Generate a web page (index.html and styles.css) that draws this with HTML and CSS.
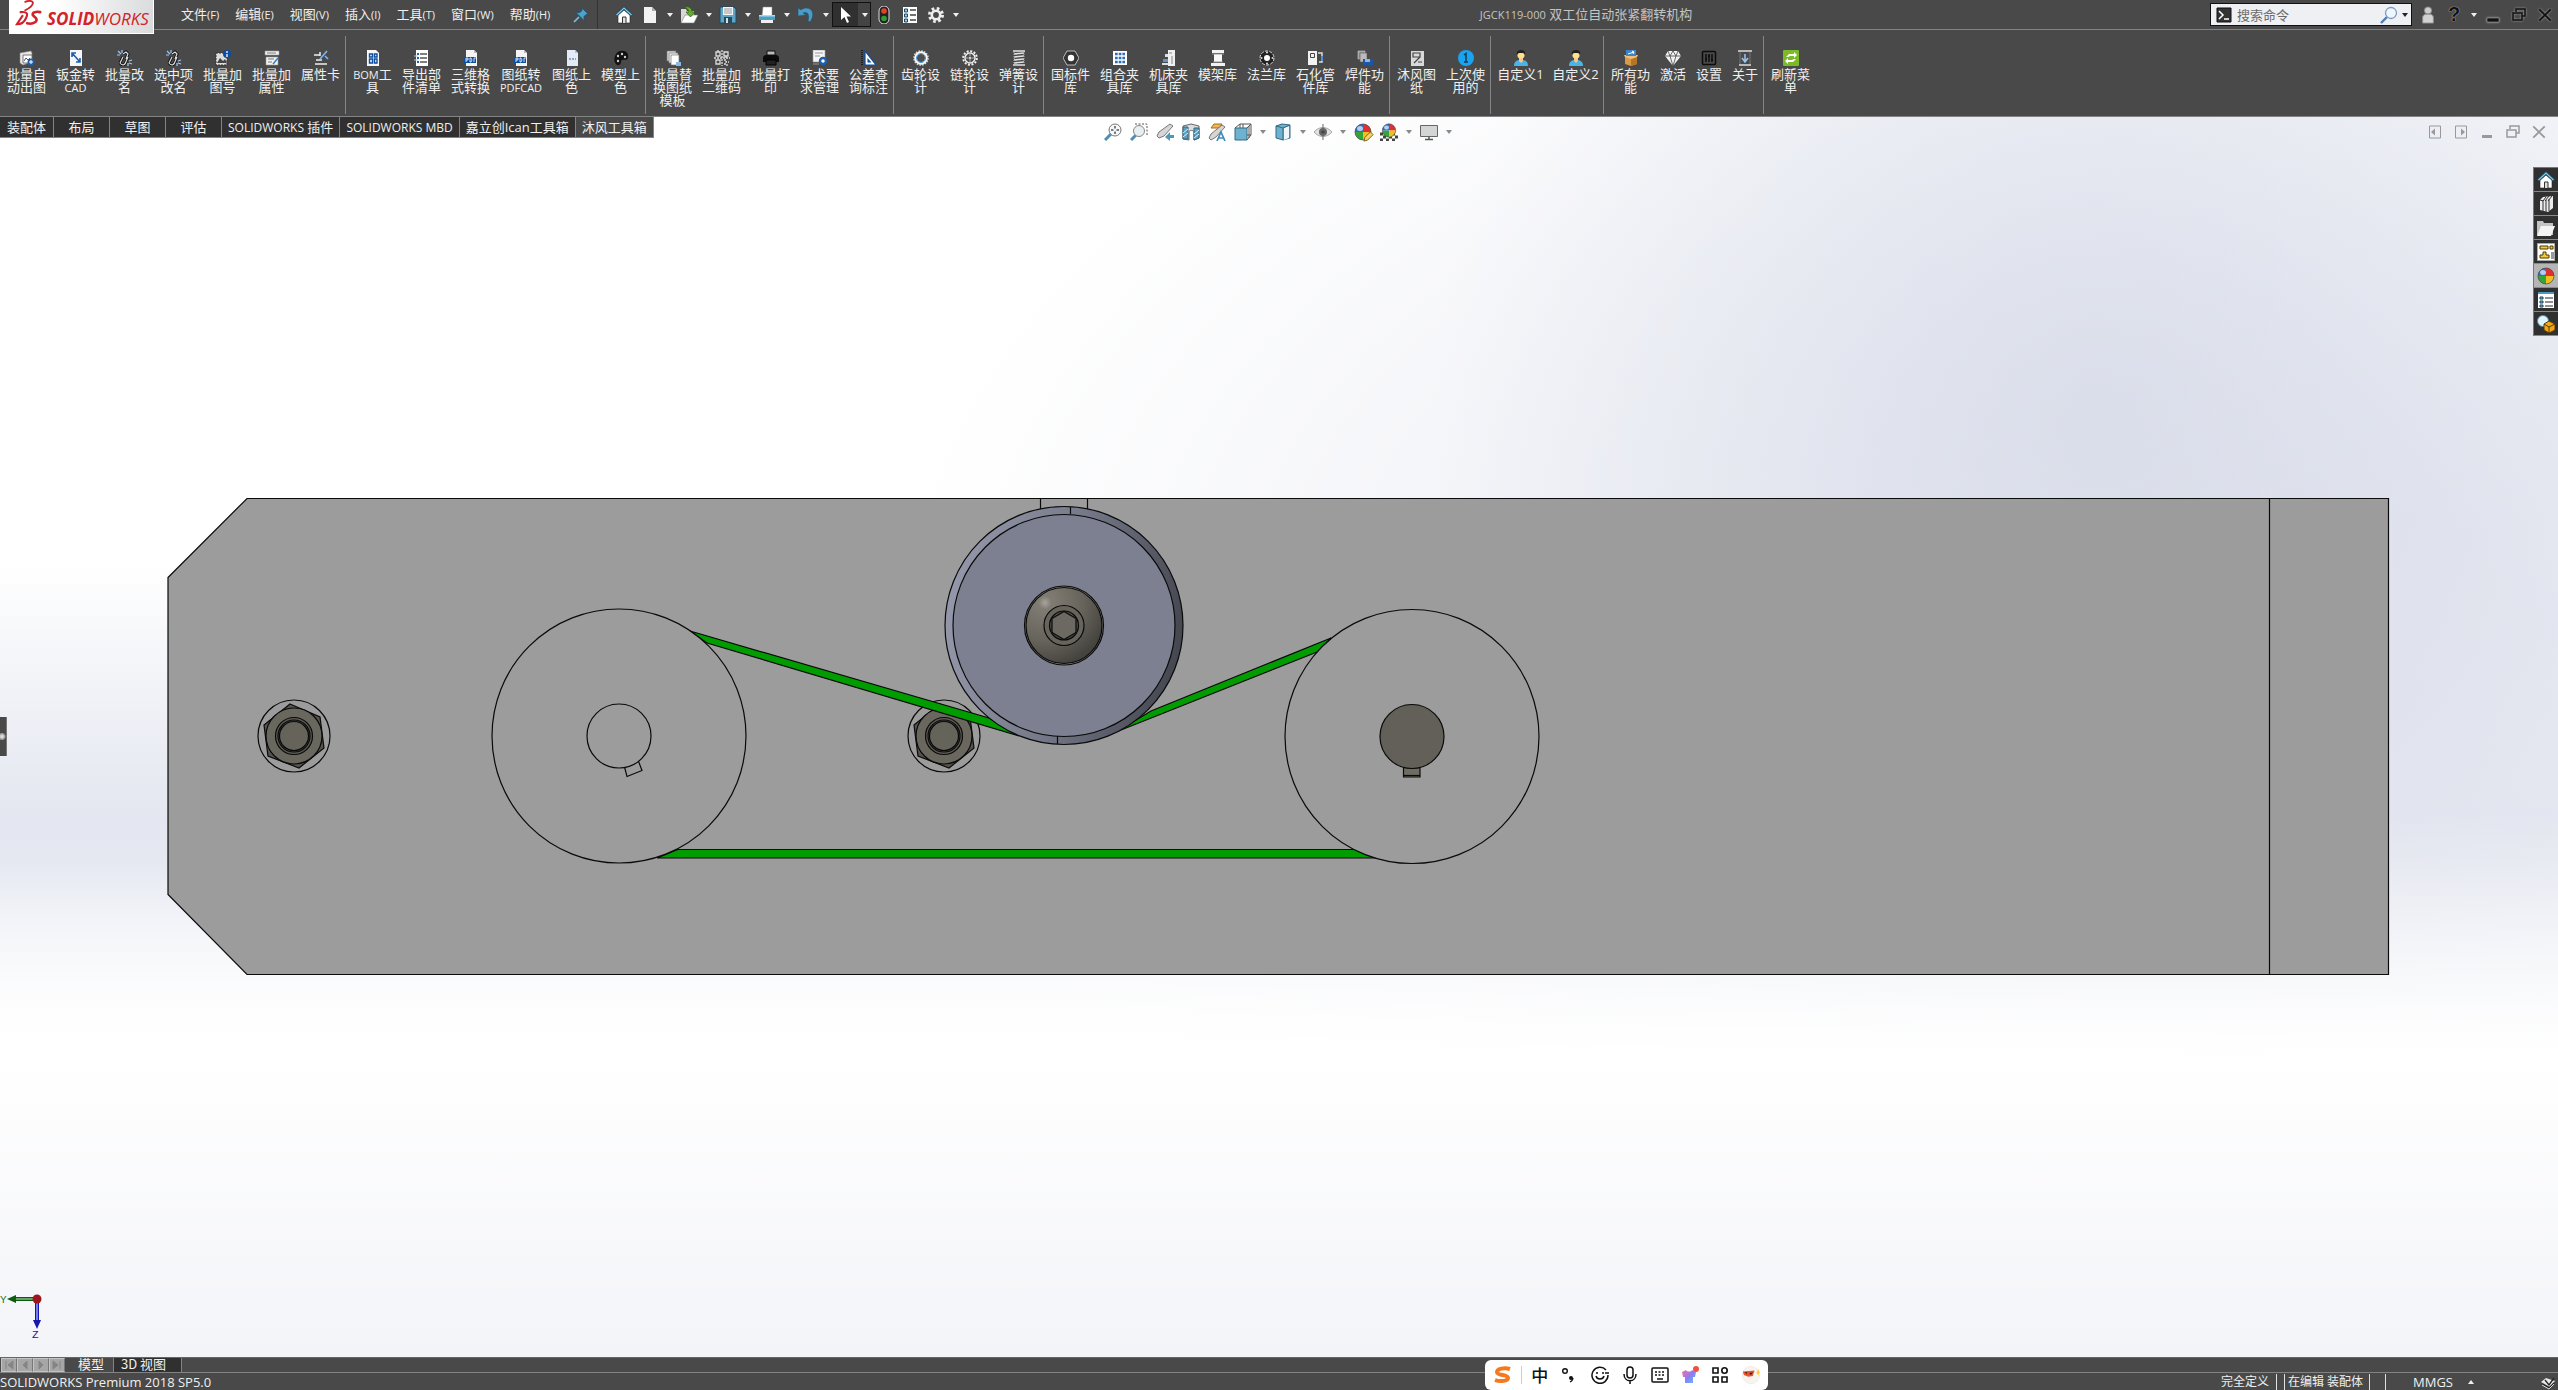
FILE: index.html
```
<!DOCTYPE html>
<html lang="zh-CN">
<head>
    <meta charset="UTF-8">
    <meta name="viewport" content="width=device-width, initial-scale=1.0">
    <title>SOLIDWORKS Premium 2018</title>
    <link rel="stylesheet" href="styles.css">
</head>
<body>
<!-- shared shapes -->
<svg class="defs" aria-hidden="true">
    <symbol id="caret" viewBox="0 0 6 4"><path d="M0 0h6L3 4z" fill="currentColor"/></symbol>
    <symbol id="home" viewBox="0 0 18 18">
        <path d="M3 9v8h12V9L9 4z" fill="#fff" stroke="#222" stroke-width=".6"/>
        <path d="M1 9.500 9 2l8 7.500" fill="none" stroke="#1d4d66" stroke-width="3"/>
        <path d="M1.500 9 9 2l7.500 7" fill="none" stroke="#8cc9e4" stroke-width="1.200"/>
        <path d="M7.500 17v-6h3.500v6" fill="#ddd" stroke="#333"/>
    </symbol>
    <symbol id="rename" viewBox="0 0 16 16">
        <path d="M3 13l3-6M8 14l3-7M6 4l3-2 2 2-2 5M3 13c2 3 5 2 5 0" fill="none" stroke="#111" stroke-width="3"/>
        <path d="M3 13l3-6M8 14l3-7M6 4l3-2 2 2-2 5M3 13c2 3 5 2 5 0" fill="none" stroke="#ddd" stroke-width="1.200"/>
        <path d="M1 1l3 3M0 5h3M5 0v3M15 10l-3 1M15 14l-3-1M11 16v-3" stroke="#9cc9ff" stroke-width="1.200"/>
    </symbol>
    <symbol id="pdf" viewBox="0 0 16 16">
        <path d="M3 0h8l3 3v13H3z" fill="#f4f4f4"/>
        <path d="M11 0v3h3" fill="#bbb"/>
        <path d="M1 7h12v6H1z" fill="#0b4da2"/>
        <path d="M3 12V8h2v2H3M7 12V8h1l1 2-1 2zM11 12V8h2" fill="none" stroke="#fff" stroke-width=".8"/>
    </symbol>
    <symbol id="user" viewBox="0 0 16 16">
        <path d="M1 16c0-5 3-6 7-6s7 1 7 6z" fill="#4bb4e6"/>
        <path d="M6 8h4v3l-2 2-2-2z" fill="#f3c58f"/>
        <circle cx="8" cy="5" r="3.600" fill="#ffe08a"/>
        <path d="M4 5c-1-4 2-5 4-5s5 1 4 5c-1-2-2-2-4-2S5 3 4 5z" fill="#222"/>
    </symbol>
    <symbol id="ball" viewBox="0 0 18 18">
        <path d="M9 9V1a8 8 0 0 1 8 8z" fill="#e23030"/>
        <path d="M9 9h8a8 8 0 0 1-8 8z" fill="#f0c020"/>
        <path d="M9 9v8a8 8 0 0 1-8-8z" fill="#35a535"/>
        <path d="M9 9H1a8 8 0 0 1 8-8z" fill="#2f6fc6"/>
        <circle cx="9" cy="9" r="8" fill="none" stroke="#444" stroke-width=".7"/>
        <ellipse cx="6" cy="5.500" rx="3" ry="2.500" fill="#fff" opacity=".65"/>
    </symbol>
    <symbol id="restore" viewBox="0 0 16 14">
        <path d="M5 4V1h9v7h-3M2 5h9v7H2z" fill="none" stroke="currentColor" stroke-width="1.500"/>
    </symbol>
    <symbol id="cross" viewBox="0 0 14 14">
        <path d="M2 2l10 10M12 2L2 12" stroke="currentColor" stroke-width="1.600"/>
    </symbol>
</svg>

<div class="app">
    <header class="titlebar">
        <div class="logo">
            <svg class="logo-mark" viewBox="0 0 28 30" fill="none" stroke="#d3222a" stroke-linecap="round">
                <path d="M10 2c5-2 9-1 8 2-1 3-4 5-8 7" stroke-width="2"/>
                <path d="M5 13c7-1 8 2 6 6-2 5-6 7-10 7l6-9" stroke-width="2.300"/>
                <path d="M26 13c-4-1-9 0-8 3 1 2 5 3 4 6-1 3-6 4-10 3" stroke-width="2.800"/>
            </svg>
            <span class="logo-text"><b>SOLID</b>WORKS</span>
        </div>
        <nav class="menus">
            <button class="menu">文件<small>(F)</small></button>
            <button class="menu">编辑<small>(E)</small></button>
            <button class="menu">视图<small>(V)</small></button>
            <button class="menu">插入<small>(I)</small></button>
            <button class="menu">工具<small>(T)</small></button>
            <button class="menu">窗口<small>(W)</small></button>
            <button class="menu">帮助<small>(H)</small></button>
        </nav>
        <button class="pin" aria-label="固定菜单">
            <svg class="icon" viewBox="0 0 16 16"><path d="M9 1l6 6-2 .500-2 2 0 4-8-8 4 0 2-2z" fill="#4aa3cf" stroke="#17506d" stroke-width=".7"/><path d="M6 10l-5 5" stroke="#7cc4e6" stroke-width="1.600"/></svg>
        </button>
        <div class="quick">
            <button class="tool" aria-label="主页"><svg class="icon-lg"><use href="#home"/></svg></button>
            <button class="tool" aria-label="新建"><svg class="icon-lg" viewBox="0 0 18 18"><path d="M3 1h8l4 4v12H3z" fill="#f2f2f2"/><path d="M11 1l4 4h-4z" fill="#aaa"/></svg></button>
            <button class="drop" aria-label="新建选项"><svg><use href="#caret"/></svg></button>
            <button class="tool" aria-label="打开"><svg class="icon-lg" viewBox="0 0 18 18"><path d="M1 3h5l1 2h7v12H1z" fill="#d8d8d8"/><path d="M5 9h13l-4 8H1z" fill="#fff" stroke="#777" stroke-width=".6"/><path d="M4 1c5-1 8 1 8 5h3l-4.500 5L6 6h3c0-2-2-4-5-5z" fill="#62b02c" stroke="#2c5f10" stroke-width=".7"/></svg></button>
            <button class="drop" aria-label="打开选项"><svg><use href="#caret"/></svg></button>
            <button class="tool" aria-label="保存"><svg class="icon-lg" viewBox="0 0 18 18"><path d="M1 1h14l2 2v14H1z" fill="#5fa5c6" stroke="#1c4b63"/><path d="M4 1h10v8H4z" fill="#f5f5f5"/><path d="M5 3h8M5 5h8M5 7h8" stroke="#999"/><path d="M5 11h8v6H5z" fill="#244c60"/><path d="M7 12h2v5H7z" fill="#ddd"/></svg></button>
            <button class="drop" aria-label="保存选项"><svg><use href="#caret"/></svg></button>
            <button class="tool" aria-label="打印"><svg class="icon-lg" viewBox="0 0 18 18"><path d="M5 1h9v9H4z" fill="#fff" stroke="#888" stroke-width=".5"/><path d="M1 9h16v5H1z" fill="#4c9fc4"/><path d="M1 9h16v1.500H1z" fill="#a8dcf0"/><path d="M3 14h12v3H3z" fill="#eee"/></svg></button>
            <button class="drop" aria-label="打印选项"><svg><use href="#caret"/></svg></button>
            <button class="tool" aria-label="撤销"><svg class="icon-lg" viewBox="0 0 18 18"><path d="M1 2v8l8-1-3-2c4-2 7 1 5 8l2 1c5-7 3-14-4-14-2 0-4 1-5 2z" fill="#4d9cc4" stroke="#1d5472" stroke-width=".6"/></svg></button>
            <button class="drop" aria-label="撤销选项"><svg><use href="#caret"/></svg></button>
            <div class="picked">
                <button class="tool" aria-label="选择"><svg class="icon-lg" viewBox="0 0 18 18"><path d="M5 1v13l3.500-3 2.500 6 2-1-2.500-5.500H15z" fill="#fff"/></svg></button>
                <button class="drop" aria-label="选择选项"><svg><use href="#caret"/></svg></button>
            </div>
            <button class="tool" aria-label="重建模型"><svg class="icon-lg" viewBox="0 0 18 18"><rect x="4" y="0" width="10" height="18" rx="5" fill="#222" stroke="#ddd"/><circle cx="9" cy="5" r="2.800" fill="#e8402a"/><circle cx="9" cy="12.500" r="2.800" fill="#2f9e2f"/></svg></button>
            <button class="tool" aria-label="文件属性"><svg class="icon-lg" viewBox="0 0 18 18"><path d="M2 1h14v16H2z" fill="#fff"/><path d="M3.500 3h3v3h-3zM3.500 8h3v3h-3zM3.500 13h3v3h-3z" fill="#9cd2ec" stroke="#1b4963"/><path d="M9 4h6M9 9h6M9 14h6" stroke="#444" stroke-width="1.500"/></svg></button>
            <button class="tool" aria-label="选项"><svg class="icon-lg" viewBox="0 0 18 18"><circle cx="9" cy="9" r="6.500" fill="none" stroke="#eee" stroke-width="3" stroke-dasharray="2.600 2.505"/><circle cx="9" cy="9" r="4.200" fill="none" stroke="#eee" stroke-width="2.600"/></svg></button>
            <button class="drop" aria-label="更多选项"><svg><use href="#caret"/></svg></button>
        </div>
        <h1 class="doc-title"><small>JGCK119-000</small> 双工位自动张紧翻转机构</h1>
        <div class="search">
            <svg class="icon" viewBox="0 0 16 16"><path d="M1 1h14v14H1z" fill="#333" stroke="#111"/><path d="M3 4l4 4-4 4M8 12h5" fill="none" stroke="#fff" stroke-width="1.500"/></svg>
            <input type="text" placeholder="搜索命令" aria-label="搜索命令">
            <svg class="icon-lg" viewBox="0 0 18 18"><path d="M7 11l-6 6" stroke="#4a7fb5" stroke-width="2.400"/><circle cx="11" cy="7" r="5.500" fill="#eef6ff" stroke="#7d9cc0" stroke-width="1.300"/></svg>
            <button class="drop dark" aria-label="搜索选项"><svg><use href="#caret"/></svg></button>
        </div>
        <div class="window-tools">
            <button class="tool" aria-label="登录"><svg class="icon-lg" viewBox="0 0 18 20"><circle cx="9" cy="5" r="4" fill="#ccc" stroke="#888"/><path d="M3 19v-6c0-3 2-4 6-4s6 1 6 4v6z" fill="#d2d2d2" stroke="#888"/></svg></button>
            <button class="tool help" aria-label="帮助">?</button>
            <button class="drop" aria-label="帮助选项"><svg><use href="#caret"/></svg></button>
            <button class="tool win" aria-label="最小化"><svg class="icon" viewBox="0 0 16 16"><path d="M2 11h12v4H2z" fill="#111" stroke="#888" stroke-width=".7"/></svg></button>
            <button class="tool win" aria-label="还原"><svg class="icon"><use href="#restore"/></svg></button>
            <button class="tool win" aria-label="关闭"><svg class="icon"><use href="#cross"/></svg></button>
        </div>
    </header>

    <div class="ribbon">
        <div class="group">
            <button class="cmd"><svg class="icon" viewBox="0 0 16 16"><path d="M1 3l11-2 1 2v9l-9 3-3-2z" fill="#e9e9e9" stroke="#888" stroke-width=".6"/><path d="M4 5h9v8H4z" fill="#fff" stroke="#555" stroke-width=".8"/><path d="M5 11l2-3 2 2 2-2" stroke="#555" fill="none"/><circle cx="12" cy="12" r="3.500" fill="#1c5fae"/><path d="M10 12h4M12 10v4" stroke="#fff"/></svg><span>批量自动出图</span></button>
            <button class="cmd"><svg class="icon" viewBox="0 0 16 16"><path d="M2 0h12v16H2z" fill="#f6f6f6"/><path d="M4 3l8 9M4 7V3h4M12 8v4H8" fill="none" stroke="#1c5fae" stroke-width="1.600"/></svg><span>钣金转<small>CAD</small></span></button>
            <button class="cmd"><svg class="icon"><use href="#rename"/></svg><span>批量改名</span></button>
            <button class="cmd"><svg class="icon"><use href="#rename"/></svg><span>选中项改名</span></button>
            <button class="cmd"><svg class="icon" viewBox="0 0 16 16"><path d="M1 3h11v12H1z" fill="#ddd" stroke="#333" stroke-dasharray="2 1"/><path d="M2 13l3-5 3 3 2-2 2 4z" fill="#444"/><circle cx="12" cy="4" r="4" fill="#0b4da2"/><path d="M12 1v2M12 4v3" stroke="#fff" stroke-width="1.300"/></svg><span>批量加图号</span></button>
            <button class="cmd"><svg class="icon" viewBox="0 0 16 16"><path d="M1 1h14v4H1zM2 7h12v8H2z" fill="#f3f3f3" stroke="#999" stroke-width=".6"/><path d="M3 3h9M4 9h6M4 12h4" stroke="#777"/><path d="M9 14l5-6" stroke="#2d7dd2" stroke-width="1.500"/></svg><span>批量加属性</span></button>
            <button class="cmd"><svg class="icon" viewBox="0 0 16 16"><path d="M1 5h6M3 10h6M2 14h12M7 2v4" stroke="#eee" stroke-width="1.500"/><path d="M7 9l7-8M12 6l3 3" stroke="#7bb4ec" stroke-width="1.700"/></svg><span>属性卡</span></button>
        </div>
        <div class="group">
            <button class="cmd"><svg class="icon" viewBox="0 0 16 16"><path d="M2 0h9l3 3v13H2z" fill="#f6f6f6"/><path d="M4.500 4h3v3h-3zM4.500 9h3v4h-3zM9.500 9h2.500v4H9.500zM9.500 4h2.500v3H9.500z" fill="none" stroke="#0b4da2" stroke-width="1.400"/></svg><span><small>BOM</small>工具</span></button>
            <button class="cmd"><svg class="icon" viewBox="0 0 16 16"><path d="M2 0h12v16H2z" fill="#fff"/><path d="M6 4h7M6 8h7M6 12h7" stroke="#555" stroke-width="1.500"/><path d="M3 4h2M3 8h2M3 12h2" stroke="#1c5fae" stroke-width="2"/><path d="M0 6h4M0 10h4" stroke="#aac8ea"/></svg><span>导出部件清单</span></button>
            <button class="cmd"><svg class="icon"><use href="#pdf"/></svg><span>三维格式转换</span></button>
            <button class="cmd wide"><svg class="icon"><use href="#pdf"/></svg><span>图纸转<small>PDFCAD</small></span></button>
            <button class="cmd"><svg class="icon" viewBox="0 0 16 16"><path d="M3 0h8l3 3v13H3z" fill="#e4ebf8"/><path d="M11 0v3h3z" fill="#b2bfd8"/><path d="M5 9h2M8 9h2M11 9h1" stroke="#7d8aa5" stroke-width="1.500"/></svg><span>图纸上色</span></button>
            <button class="cmd"><svg class="icon" viewBox="0 0 16 16"><path d="M8 1c5-1 8 3 7 7-1 3-4 1-6 2-2 1 0 4-3 5C3 16 0 11 2 6c1-3 3-5 6-5z" fill="#111"/><circle cx="5" cy="6" r="1.200" fill="#ccc"/><circle cx="9" cy="4" r="1.200" fill="#ccc"/><circle cx="12" cy="7" r="1.200" fill="#ccc"/><circle cx="5" cy="11" r="1.200" fill="#ccc"/></svg><span>模型上色</span></button>
        </div>
        <div class="group">
            <button class="cmd"><svg class="icon" viewBox="0 0 16 16"><path d="M2 1h9v10H2z" fill="#ddd" stroke="#777" stroke-width=".7"/><path d="M4 3h9v10H4z" fill="#eee" stroke="#777" stroke-width=".7"/><path d="M6 5h8v10H6z" fill="#fff" stroke="#777" stroke-width=".7"/><path d="M11 12h5v4h-5z" fill="#88b8e8"/></svg><span>批量替换图纸模板</span></button>
            <button class="cmd"><svg class="icon" viewBox="0 0 16 16" fill="none" stroke="#ddd" stroke-width="1.300"><path d="M2 2h4v4H2zM10 2h4v4h-4zM2 10h4v4H2z"/><path d="M8 0v16M0 8h16M10 10h2v2h3M10 14h3v2M4 0v2M12 6v2" stroke-dasharray="2 1"/></svg><span>批量加二维码</span></button>
            <button class="cmd"><svg class="icon" viewBox="0 0 16 16"><path d="M4 1h8v4H4z" fill="#bbb" stroke="#111"/><path d="M2 5h12l2 2v5H0V7z" fill="#0b0b0b"/><path d="M3 10h10v5H3z" fill="#222" stroke="#000"/></svg><span>批量打印</span></button>
            <button class="cmd"><svg class="icon" viewBox="0 0 16 16"><path d="M1 0h12v12H1z" fill="#f5f5f5" stroke="#999" stroke-width=".6"/><path d="M3 3h8M3 6h5M1 14h6" stroke="#999"/><circle cx="11" cy="11" r="3" fill="#fff" stroke="#1c5fae" stroke-width="2.500"/></svg><span>技术要求管理</span></button>
            <button class="cmd"><svg class="icon" viewBox="0 0 16 16"><path d="M1 0v16" stroke="#111" stroke-width="1.500" stroke-dasharray="1 1"/><path d="M4 1v14h11z" fill="#fff" stroke="#0b4da2" stroke-width="1.200"/><path d="M6.500 8v4.500h4z" fill="#0b4da2"/></svg><span>公差查询标注</span></button>
        </div>
        <div class="group">
            <button class="cmd"><svg class="icon" viewBox="0 0 16 16"><circle cx="8" cy="8" r="6.800" fill="#fff" stroke="#ddd" stroke-width="2" stroke-dasharray="1.500 1.170"/><circle cx="8" cy="8" r="5" fill="#4f4f4f" stroke="#fff" stroke-width="2"/><circle cx="8" cy="8" r="4.600" fill="none" stroke="#4d9be0"/></svg><span>齿轮设计</span></button>
            <button class="cmd"><svg class="icon" viewBox="0 0 16 16" fill="none"><circle cx="8" cy="8" r="6.800" stroke="#eee" stroke-width="2" stroke-dasharray="2 1.560"/><circle cx="8" cy="8" r="5" stroke="#eee" stroke-width="1.500"/><circle cx="8" cy="8" r="1.500" fill="#ccc"/><path d="M8 3v3M8 10v3M3 8h3M10 8h3" stroke="#bbb"/></svg><span>链轮设计</span></button>
            <button class="cmd"><svg class="icon" viewBox="0 0 16 16" fill="none"><path d="M2 1h12M3 4l10-1M3 7l10-1M3 10l10-1M3 13l10-1M2 15h12" stroke="#e2e2e2" stroke-width="1.600"/><path d="M3 2v12M13 2v12" stroke="#aaa" stroke-dasharray="1 1"/></svg><span>弹簧设计</span></button>
        </div>
        <div class="group">
            <button class="cmd"><svg class="icon" viewBox="0 0 16 16"><path d="M4 1h8l4 7-4 7H4L0 8z" fill="#333" stroke="#bbb"/><circle cx="8" cy="8" r="3.200" fill="#fff"/></svg><span>国标件库</span></button>
            <button class="cmd"><svg class="icon" viewBox="0 0 16 16"><path d="M1 1h14v14H1z" fill="#fff"/><path d="M3 4h10M3 8h10M3 12h10" stroke="#2f6fba" stroke-width="2.400" stroke-dasharray="2.700 1"/></svg><span>组合夹具库</span></button>
            <button class="cmd"><svg class="icon" viewBox="0 0 16 16"><path d="M7 0h7v16H7z" fill="#f0f0f0"/><path d="M8 3h3M11 6v8" stroke="#888"/><path d="M2 9h5v3H2z" fill="#5d94cf"/><path d="M1 13h6v2H1zM4 4h3v3H4z" fill="#ddd"/></svg><span>机床夹具库</span></button>
            <button class="cmd"><svg class="icon" viewBox="0 0 16 16"><path d="M2 0h12v3H2zM1 13h14v3H1z" fill="#f2f2f2"/><path d="M4 4h8v8H4z" fill="#f8f8f8"/><path d="M2 4h12M3 12h10" stroke="#999"/></svg><span>模架库</span></button>
            <button class="cmd"><svg class="icon" viewBox="0 0 16 16"><circle cx="8" cy="8" r="7" fill="#222" stroke="#ddd" stroke-dasharray="3 1.400"/><circle cx="8" cy="8" r="3" fill="#fff"/><g fill="#ddd"><circle cx="8" cy="2.500" r="1"/><circle cx="8" cy="13.500" r="1"/><circle cx="2.500" cy="8" r="1"/><circle cx="13.500" cy="8" r="1"/></g></svg><span>法兰库</span></button>
            <button class="cmd"><svg class="icon" viewBox="0 0 16 16"><path d="M0 1h9v14H0z" fill="#f2f2f2"/><path d="M2.500 3.500h4v4h-4z" fill="none" stroke="#444"/><path d="M10 3h4v9h-3" fill="none" stroke="#ddd" stroke-width="1.500"/><path d="M13 6h2v5h-2z" fill="#4d8fd0"/></svg><span>石化管件库</span></button>
            <button class="cmd"><svg class="icon" viewBox="0 0 16 16"><path d="M1 1h7v8H1z" fill="#999" stroke="#ccc" stroke-width=".6"/><path d="M3 3h7v9H3z" fill="#bbb" stroke="#555" stroke-width=".6"/><path d="M6 9h10v6H6z" fill="#1c56a6"/><path d="M8 9v3h5V9" fill="#8fb6e6"/></svg><span>焊件功能</span></button>
        </div>
        <div class="group">
            <button class="cmd"><svg class="icon" viewBox="0 0 16 16"><path d="M2 1h13v15H2z" fill="#d9d9d9"/><path d="M4 3h7v4H4zM5 13l6-6M9 12h4" fill="none" stroke="#444" stroke-width="1.200"/></svg><span>沐风图纸</span></button>
            <button class="cmd"><svg class="icon" viewBox="0 0 16 16"><circle cx="8" cy="8" r="8" fill="#1aa3f0"/><path d="M6 5l2-1.500V12M6 12h4" fill="none" stroke="#103a58" stroke-width="1.500"/></svg><span>上次使用的</span></button>
        </div>
        <div class="group">
            <button class="cmd wider"><svg class="icon"><use href="#user"/></svg><span>自定义1</span></button>
            <button class="cmd wider"><svg class="icon"><use href="#user"/></svg><span>自定义2</span></button>
        </div>
        <div class="group">
            <button class="cmd"><svg class="icon" viewBox="0 0 16 16"><path d="M2 7h12v7l-6 2-6-2z" fill="#d99a45"/><path d="M8 9v7l6-2V7z" fill="#b87425"/><path d="M2 7l6 2 6-2 1-2H1z" fill="#f0c078"/><path d="M3 0h10v6H3z" fill="#3d84cf"/><path d="M5 4l6-2M9 1l2 1-1 2" stroke="#fff" fill="none"/></svg><span>所有功能</span></button>
            <button class="cmd narrow"><svg class="icon" viewBox="0 0 16 16"><path d="M3 1h10l3 5-8 10L0 6z" fill="#f2f2f2"/><path d="M0 6h16M3 1l2 5 3 10 3-10 2-5M8 1L5 6M8 1l3 5" fill="none" stroke="#444" stroke-width=".8"/></svg><span>激活</span></button>
            <button class="cmd narrow"><svg class="icon" viewBox="0 0 16 16" fill="none" stroke="#0c0c0c" stroke-width="1.500"><rect x="1.500" y="1.500" width="13" height="13" rx="1"/><path d="M5 4v8M8 4v8M11 4v8M4 9h2M7 6h2M10 10h2"/></svg><span>设置</span></button>
            <button class="cmd narrow"><svg class="icon" viewBox="0 0 16 16"><path d="M1 1h14M2 15h12" stroke="#ddd" stroke-width="1.500"/><path d="M3 2v12M13 2v12" stroke="#777"/><path d="M8 4v7M5 8l3 4 3-4" fill="none" stroke="#9dc6f2" stroke-width="1.500"/></svg><span>关于</span></button>
        </div>
        <div class="group">
            <button class="cmd"><svg class="icon" viewBox="0 0 16 16"><rect width="16" height="16" rx="1" fill="#7dba28"/><path d="M3 7l3-3h5V2l3 3-3 3V6H7L5 7zM13 9l-3 3H5v2l-3-3 3-3v2h4l2-1z" fill="#fff"/></svg><span>刷新菜单</span></button>
        </div>
    </div>

    <main class="viewport">
        <svg class="model" viewBox="0 117 2558 1240" preserveAspectRatio="xMidYMid meet">
            <defs>
                <linearGradient id="rim" x1="0" x2="1" y1=".3" y2=".5">
                    <stop offset="0" stop-color="#9599ab"/>
                    <stop offset=".5" stop-color="#777a8a"/>
                    <stop offset="1" stop-color="#454751"/>
                </linearGradient>
                <radialGradient id="dome" cx=".25" cy=".2" r=".85">
                    <stop offset="0" stop-color="#a8a49c"/>
                    <stop offset=".1" stop-color="#807c73"/>
                    <stop offset=".6" stop-color="#66635b"/>
                    <stop offset="1" stop-color="#45433e"/>
                </radialGradient>
                <g id="nut">
                    <circle r="36" fill="none"/>
                    <path d="M-4-32 26-19 30 12 5 32-26 20-30-11z" fill="#57544d"/>
                    <circle r="28" fill="#6a675f"/>
                    <circle r="18.500" fill="#5c5952"/>
                    <circle r="16" fill="#4c4a44"/>
                    <circle r="14.500" fill="#66635b"/>
                </g>
            </defs>
            <g stroke="#0a0a0a" stroke-width="1.200">
                <!-- base plate -->
                <path d="M168 577.500 247 498.500H2388.500V974.500H247L168 894.500z" fill="#9c9c9c"/>
                <path d="M2269.500 498v476M1040.500 498v14M1087.500 498v14"/>
                <use href="#nut" x="294" y="736"/>
                <use href="#nut" x="944" y="736"/>
                <!-- belt -->
                <path d="M690 631 989 718 1019 736 707 643zM1331 638 1151 711 1116 732 1317 652zM657 858 678 849.500H1355L1377 858z" fill="#009c00"/>
                <!-- pulleys -->
                <g fill="#9c9c9c">
                    <circle cx="619" cy="736" r="127"/>
                    <path d="M624 765 627 776.500 642 770.500 638 760"/>
                    <circle cx="619" cy="736" r="32"/>
                    <circle cx="1412" cy="736.500" r="127"/>
                </g>
                <path d="M1403.500 765v12h16.500v-12" fill="#6f6c64"/>
                <path d="M1403.500 775.500h16.500"/>
                <circle cx="1412" cy="736.500" r="32" fill="#63605a"/>
                <!-- tension roller -->
                <circle cx="1064" cy="625.500" r="119" fill="url(#rim)"/>
                <circle cx="1064" cy="625.500" r="111" fill="#7d8090"/>
                <path d="M1070.500 507v7M1057.500 736v8"/>
                <circle cx="1064" cy="625.500" r="39.500" fill="#8d8a84"/>
                <circle cx="1064" cy="625.500" r="38" fill="url(#dome)"/>
                <circle cx="1064" cy="625.500" r="20" fill="#67645c"/>
                <circle cx="1064" cy="625.500" r="14.500" fill="#504e48"/>
                <path d="M1064 611.500 1076 618.500V632.500L1064 639.500 1052 632.500V618.500z" fill="#6c6962"/>
            </g>
            <!-- axes -->
            <path d="M14 1297.500h20v3H14z" fill="#6aa06a" stroke="#0e5a0e"/>
            <path d="M7 1299 16 1295v8z" fill="#0e5a0e"/>
            <path d="M35.500 1302h3v20h-3z" fill="#7a7ae0" stroke="#1515b0"/>
            <path d="M33 1320h8l-4 9z" fill="#1515b0"/>
            <circle cx="37" cy="1299" r="4.500" fill="#a0141c"/>
            <text class="axis-y" x="0" y="1303">Y</text>
            <text class="axis-z" x="32" y="1338">Z</text>
        </svg>

        <div class="tabs">
            <button class="tab first">装配体</button>
            <button class="tab">布局</button>
            <button class="tab">草图</button>
            <button class="tab">评估</button>
            <button class="tab"><small>SOLIDWORKS</small> 插件</button>
            <button class="tab"><small>SOLIDWORKS MBD</small></button>
            <button class="tab">嘉立创Ican工具箱</button>
            <button class="tab active">沐风工具箱</button>
        </div>

        <div class="hud">
            <button class="tool" aria-label="整屏显示全图"><svg class="icon-lg" viewBox="0 0 18 18"><path d="M7 11l-6 6" stroke="#4d8fb3" stroke-width="3"/><circle cx="11" cy="7" r="6" fill="#f4f8fb" stroke="#777"/><path d="M11 3v8M7 7h8" stroke="#555" stroke-width="1.500" stroke-dasharray="2.500 3"/></svg></button>
            <button class="tool" aria-label="局部放大"><svg class="icon-lg" viewBox="0 0 18 18"><path d="M5 1h12v12" fill="none" stroke="#555" stroke-dasharray="2 1.500"/><path d="M6 12l-5 5" stroke="#4d8fb3" stroke-width="3"/><circle cx="9" cy="8" r="5.500" fill="#e8eef2" stroke="#888"/></svg></button>
            <button class="tool" aria-label="上一视图"><svg class="icon-lg" viewBox="0 0 18 18"><path d="M14 1l3 2-9 10-5 2-2-2 2-4z" fill="#d6d6d6" stroke="#777"/><path d="M18 12h-4V9l-5 5 5 4v-3h4z" fill="#4d97bb"/></svg></button>
            <button class="tool" aria-label="剖面视图"><svg class="icon-lg" viewBox="0 0 18 18"><path d="M1 3l8-2 8 2v12l-5 2V9c0-2-5-2-5 0v8l-6-1z" fill="#ddd" stroke="#666"/><path d="M1 4h5v12H1zM12 5h5v10l-5 2z" fill="#5ba0c2" stroke="#35657e"/><path d="M1 10l5-4M1 14l5-4M12 11l5-4M12 15l5-4" stroke="#d9f0fa"/></svg></button>
            <button class="tool" aria-label="动态注解视图"><svg class="icon-lg" viewBox="0 0 18 18"><path d="M6 1h8l-3 4H3z" fill="#f0b84e" stroke="#a07020"/><path d="M14 2l3 2-9 10-5 3-2-2 2-4z" fill="#d6d6d6" stroke="#777"/><path d="M9 18l4-9 4 9M11 15h5" fill="none" stroke="#3f8db5" stroke-width="1.700"/></svg></button>
            <button class="tool" aria-label="视图定向"><svg class="icon-lg" viewBox="0 0 18 18"><path d="M1 5l5-4h11v11l-4 5" fill="#fff" stroke="#555"/><path d="M1 5h12v12H1z" fill="#6fb2d0" stroke="#346a85"/><path d="M6 1v4M13 12h4M9 1v4M13 5l4-4M15 3v12" fill="none" stroke="#555"/></svg></button>
            <button class="drop" aria-label="视图定向选项"><svg><use href="#caret"/></svg></button>
            <button class="tool" aria-label="显示样式"><svg class="icon-lg" viewBox="0 0 18 18"><path d="M2 3l6-2 8 1v13l-7 2-7-2z" fill="#6fb2d0" stroke="#346a85"/><path d="M10 5l5-2v12l-5 2z" fill="#eef6fa"/><path d="M2 3l7 2v12M9 5l7-3" fill="none" stroke="#346a85"/></svg></button>
            <button class="drop" aria-label="显示样式选项"><svg><use href="#caret"/></svg></button>
            <button class="tool" aria-label="隐藏/显示项目"><svg class="icon-lg" viewBox="0 0 18 18"><path d="M0 9c5-6 13-6 18 0-5 6-13 6-18 0z" fill="#e2e2e2" stroke="#aaa"/><circle cx="9" cy="9" r="4" fill="#666"/><circle cx="9" cy="9" r="1.500" fill="#222"/><path d="M9 1v16" stroke="#666"/></svg></button>
            <button class="drop" aria-label="隐藏选项"><svg><use href="#caret"/></svg></button>
            <button class="tool" aria-label="编辑外观"><svg class="icon-lg"><use href="#ball"/></svg><svg class="pencil" viewBox="0 0 12 12"><path d="M1 11l1-4 6-6 3 3-6 6z" fill="#f3d267" stroke="#7a5b1a"/></svg></button>
            <button class="tool" aria-label="应用布景"><svg class="icon-lg" viewBox="0 0 18 18"><path d="M0 10h18v8H0z" fill="#fff"/><path d="M0 11h18M3 14h15M0 17h18" stroke="#444" stroke-width="3" stroke-dasharray="3 3"/><use href="#ball" width="16" height="15" x="1"/></svg></button>
            <button class="drop" aria-label="布景选项"><svg><use href="#caret"/></svg></button>
            <button class="tool" aria-label="视图设定"><svg class="icon-lg" viewBox="0 0 18 18"><path d="M.500 2.500h17v11H.500z" fill="#d5d5d5" stroke="#666"/><path d="M9 14v3M5 16.500h8" stroke="#555" stroke-width="1.500"/></svg></button>
            <button class="drop" aria-label="视图设定选项"><svg><use href="#caret"/></svg></button>
        </div>

        <div class="doc-tools">
            <button class="tool" aria-label="向左平铺"><svg class="icon" viewBox="0 0 16 16"><path d="M2.500 2h11v12h-11z" fill="none" stroke="currentColor"/><path d="M4 8l4-3.500v7z" fill="currentColor"/></svg></button>
            <button class="tool" aria-label="向右平铺"><svg class="icon" viewBox="0 0 16 16"><path d="M2.500 2h11v12h-11z" fill="none" stroke="currentColor"/><path d="M12 8L8 4.500v7z" fill="currentColor"/></svg></button>
            <button class="tool" aria-label="最小化文档"><svg class="icon" viewBox="0 0 16 16"><path d="M3 11h10v3H3z" fill="currentColor"/></svg></button>
            <button class="tool" aria-label="还原文档"><svg class="icon"><use href="#restore"/></svg></button>
            <button class="tool" aria-label="关闭文档"><svg class="icon"><use href="#cross"/></svg></button>
        </div>

        <aside class="taskpane">
            <button class="pane" aria-label="资源"><svg class="icon-lg"><use href="#home"/></svg></button>
            <button class="pane" aria-label="设计库"><svg class="icon-lg" viewBox="0 0 18 18"><path d="M3 5l3-3 10-1v12l-5 4-8-2z" fill="#ececec"/><path d="M6 5v11M9 5v12M12 4v12M3 5l3 1 3-4M8 6l4-5M11 6l4-5" fill="none" stroke="#333"/></svg></button>
            <button class="pane" aria-label="文件探索器"><svg class="icon-lg" viewBox="0 0 18 18"><path d="M0 2h6l1 2h9v12H0z" fill="#c4c4c4"/><path d="M4 7h14l-4 10H0z" fill="#f4f4f4"/></svg></button>
            <button class="pane" aria-label="视图调色板"><svg class="icon-lg" viewBox="0 0 18 18"><path d="M.500.500h17v17H.500z" fill="#fff" stroke="#aaa"/><path d="M3 3h8v3H3zM13 3h3v3h-3zM6 9h3v3h3v3H3v-3h3z" fill="#f4c93a" stroke="#4a3a00"/><path d="M14 9h3v7h-3z" fill="#999"/></svg></button>
            <button class="pane current" aria-label="外观、布景和贴图"><svg class="icon-lg"><use href="#ball"/></svg></button>
            <button class="pane" aria-label="自定义属性"><svg class="icon-lg" viewBox="0 0 18 18"><path d="M1 1h16v16H1z" fill="#fff"/><path d="M1 1h16v2H1z" fill="#4d97bb"/><path d="M3 6h3v2H3zM3 10h3v2H3zM3 14h3v2H3z" fill="#8fc9e4" stroke="#143f56"/><path d="M8 7h8M8 11h8M8 15h8" stroke="#222"/></svg></button>
            <button class="pane" aria-label="论坛"><svg class="icon-lg" viewBox="0 0 18 18"><circle cx="6" cy="6" r="5.500" fill="#dff4fb" stroke="#4c8ea9"/><path d="M12 6l6 3v6l-6 3-5-3V9z" fill="#f0a818" stroke="#5a3a00"/><path d="M7 9l5 3 6-3M12 12v6" fill="none" stroke="#5a3a00"/></svg></button>
        </aside>

        <button class="handle" aria-label="展开设计树"></button>
    </main>

    <footer class="footer">
        <div class="sheets">
            <div class="sheet-nav">
                <button aria-label="第一个"><svg viewBox="0 0 10 10"><path d="M2 1v8M9 1L4 5l5 4z"/></svg></button>
                <button aria-label="上一个"><svg viewBox="0 0 10 10"><path d="M7 1L3 5l4 4z"/></svg></button>
                <button aria-label="下一个"><svg viewBox="0 0 10 10"><path d="M3 1l4 4-4 4z"/></svg></button>
                <button aria-label="最后一个"><svg viewBox="0 0 10 10"><path d="M8 1v8M1 1l5 4-5 4z"/></svg></button>
            </div>
            <button class="sheet active">模型</button>
            <button class="sheet">3D 视图</button>
        </div>
        <div class="status">
            <span class="product">SOLIDWORKS Premium 2018 SP5.0</span>
            <span class="state">完全定义</span>
            <span class="state mode">在编辑 装配体</span>
            <span class="state gap"></span>
            <button class="units">MMGS <svg><use href="#caret"/></svg></button>
            <svg class="icon tag" viewBox="0 0 16 16"><path d="M1 8l5-4 9 3-5 6z" fill="#e8e8e8"/><path d="M5 6l4 5 5-7M2 10l7 4 5-5" fill="none" stroke="#222" stroke-width="1.300"/><path d="M2 11l7 4 5-5" fill="none" stroke="#ddd"/></svg>
        </div>
        <!-- floating input method bar -->
        <div class="ime">
            <svg class="ime-logo" viewBox="0 0 20 18"><path d="M17 3C11 1 4 3 4 6c0 4 11 2 11 6 0 3-8 4-13 2" fill="none" stroke="#f57a1f" stroke-width="4"/></svg>
            <i></i>
            <button>中</button>
            <button aria-label="标点"><svg viewBox="0 0 18 18"><circle cx="4" cy="5" r="2.300" fill="none" stroke="#111" stroke-width="1.400"/><circle cx="10" cy="12" r="2" fill="#111"/><path d="M12 12c0 2-1 3-3 4" fill="none" stroke="#111" stroke-width="1.200"/></svg></button>
            <button aria-label="表情"><svg viewBox="0 0 18 18" fill="none" stroke="#111" stroke-width="1.500"><path d="M15 4a8 8 0 1 0 2 5"/><path d="M5 10c1 4 7 4 8 0M6 6v2M12 6v2M14 7h4"/></svg></button>
            <button aria-label="语音"><svg viewBox="0 0 18 18" fill="none" stroke="#111" stroke-width="1.500"><rect x="6" y="1" width="6" height="11" rx="3"/><path d="M3 8c0 9 12 9 12 0M9 15v3"/></svg></button>
            <button aria-label="键盘"><svg viewBox="0 0 18 18" fill="none" stroke="#111" stroke-width="1.500"><rect x="1" y="2" width="16" height="14" rx="1"/><path d="M4 6h10M4 9h10" stroke-dasharray="2 1.500"/><path d="M6 13h6"/></svg></button>
            <button aria-label="皮肤"><svg viewBox="0 0 18 18"><defs><linearGradient id="shirt" x2="1" y2="1"><stop offset="0" stop-color="#ff6f91"/><stop offset=".5" stop-color="#8f7bf5"/><stop offset="1" stop-color="#5ac4ff"/></linearGradient></defs><path d="M1 6l4-2c1 2 5 2 6 0l4 2-1 5h-2v6H4v-6H2z" fill="url(#shirt)"/><circle cx="15" cy="3" r="3" fill="#f0503c"/></svg></button>
            <button aria-label="工具箱"><svg viewBox="0 0 18 18" fill="none" stroke="#111" stroke-width="1.600"><path d="M2 2h5v5H2zM2 11h5v5H2zM11 11h5v5h-5z"/><circle cx="13.500" cy="4.500" r="2.700"/></svg></button>
            <button aria-label="头像"><svg viewBox="0 0 20 20"><circle cx="10" cy="10" r="9.500" fill="#faf4f0" stroke="#e6ddd8" stroke-width=".6"/><path d="M1 6l13-1-2 6-5 1-5-2z" fill="#e8552a"/><path d="M3 7l3 0-1 2zM8 8l4-1-2 3z" fill="#222"/><path d="M18 3l1 3 1 1-1 1-1 3-1-3-1-1 1-1z" fill="#ffc83a"/></svg></button>
        </div>
    </footer>
</div>
</body>
</html>
```
FILE: styles.css
```
:root {
    --bar: #494949;
    --bar-dark: #303030;
    --line: #838383;
    --text: #f0f0f0;
}

* {
    box-sizing: border-box;
}

body {
    margin: 0;
    font-family: "Open Sans", "Noto Sans CJK SC", sans-serif;
    font-size: 13px;
    line-height: 13px;
    color: var(--text);
}

button {
    margin: 0;
    padding: 0;
    border: none;
    background: none;
    font: inherit;
    color: inherit;
    white-space: nowrap;
}

/* latin text next to chinese labels */
small {
    font-size: 11px;
}

svg {
    display: block;
    flex: none;
}

.defs {
    position: absolute;
    width: 0;
    height: 0;
}

.app {
    display: flex;
    flex-direction: column;
    height: 100vh;
    overflow: hidden;
}

.icon {
    width: 16px;
    height: 16px;
}

.icon-lg {
    width: 18px;
    height: 18px;
}

.tool,
.drop {
    display: flex;
    align-items: center;
    justify-content: center;
    width: 26px;
    height: 25px;
}

.drop {
    width: 13px;
}

.drop svg {
    width: 6px;
    height: 4px;
}

/* title bar */
.titlebar {
    display: flex;
    align-items: center;
    height: 30px;
    flex: none;
    background: var(--bar);
    border-bottom: 1px solid var(--line);
}

.logo {
    position: relative;
    z-index: 1;
    display: flex;
    align-items: flex-start;
    align-self: flex-start;
    width: 145px;
    height: 34px;
    margin-left: 9px;
    padding-left: 5px;
    background: linear-gradient(100deg, #fff 30%, #d9dadc);
    border: 1px solid #fff;
    border-top: none;
}

.logo-mark {
    width: 28px;
    height: 28px;
}

.logo-text {
    padding: 9px 0 0 4px;
    font-size: 17px;
    line-height: 20px;
    font-style: italic;
    color: #d3222a;
}

.menus {
    display: flex;
    gap: 16px;
    width: 368px;
    margin-left: 27px;
}

.pin {
    margin-left: 24px;
}

.quick {
    display: flex;
    align-items: center;
    height: 29px;
    margin-left: 8px;
    padding-left: 13px;
    border-left: 1px solid #333;
}

.picked {
    display: flex;
    background: var(--bar-dark);
    outline: 1px solid #111;
    outline-offset: -1px;
}

.picked .drop {
    background: #444;
}

.doc-title {
    flex: 1;
    margin: 0;
    text-align: center;
    font-size: 13px;
    font-weight: normal;
    color: #c4c4c4;
}

.search {
    display: flex;
    align-items: center;
    width: 202px;
    height: 23px;
    padding-left: 5px;
    background: #eef0f4;
    border: 1px solid #111;
}

.search input {
    flex: 1;
    min-width: 0;
    padding: 0 5px;
    border: none;
    background: none;
    font: inherit;
}

.search input::placeholder {
    color: #6c6c6c;
}

.dark {
    color: #222;
}

.window-tools {
    display: flex;
    align-items: center;
    margin-left: 3px;
}

.help {
    font-family: "Liberation Sans", sans-serif;
    font-size: 20px;
    font-weight: bold;
    color: #111;
    text-shadow: 0 0 1px #bbb, 0 0 1px #bbb;
}

.win {
    color: #111;
    filter: drop-shadow(0 0 1px #aaa);
}

/* ribbon */
.ribbon {
    display: flex;
    flex: none;
    height: 87px;
    padding: 6px 0 2px;
    background: var(--bar);
    border-bottom: 1px solid var(--line);
}

.group {
    display: flex;
    padding-left: 2px;
    border-right: 1px solid #858585;
}

.group:last-child {
    border-right: none;
}

.cmd {
    display: flex;
    flex-direction: column;
    align-items: center;
    width: 49px;
    padding-top: 14px;
    gap: 2px;
    white-space: normal;
}

.cmd span {
    width: 100%;
    padding: 0 2px;
    text-align: center;
}

.cmd.narrow {
    width: 36px;
}

.cmd.wide {
    width: 52px;
}

.cmd.wider {
    width: 55px;
}

/* graphics area */
.viewport {
    position: relative;
    flex: 1;
    min-height: 0;
    background:
        linear-gradient(to bottom, rgba(255, 255, 255, 0) 56%, #fff 76%, #f3f4f8 100%),
        radial-gradient(ellipse 26% 55% at 82% 24%, rgba(212, 217, 231, .75), rgba(212, 217, 231, 0)),
        radial-gradient(ellipse 55% 60% at 90% 40%, rgba(229, 231, 240, .95) 15%, rgba(229, 231, 240, 0)),
        linear-gradient(to bottom, #fff 36%, #dfe2ee 60%, #fff 76%);
}

.model {
    width: 100%;
    height: 100%;
}

.axis-y,
.axis-z {
    font-family: "Liberation Mono", monospace;
    font-size: 11px;
    fill: #1d7a1d;
}

.axis-z {
    fill: #1515b0;
}

.tabs {
    position: absolute;
    top: 0;
    left: 0;
    display: flex;
    border-bottom: 1px solid var(--line);
}

.tab {
    min-width: 56px;
    height: 20px;
    padding: 0 6px;
    background: var(--bar-dark);
    border-right: 1px solid var(--line);
}

.tab small {
    font-size: 12px;
}

.tab.first {
    min-width: 54px;
}

.tab.active {
    background: var(--bar);
}

.hud {
    position: absolute;
    top: 2px;
    left: 43%;
    display: flex;
    align-items: center;
    color: #8a8a8a;
}

.hud .tool {
    position: relative;
}

.hud .drop {
    width: 14px;
}

.pencil {
    position: absolute;
    right: 2px;
    bottom: 2px;
    width: 11px;
    height: 11px;
}

.doc-tools {
    position: absolute;
    top: 2px;
    right: 6px;
    display: flex;
    color: #999;
}

.taskpane {
    position: absolute;
    top: 50px;
    right: 0;
    display: flex;
    flex-direction: column;
    border: 1px solid #777;
    border-width: 1px 0 0 1px;
}

.pane {
    display: flex;
    align-items: center;
    justify-content: center;
    width: 24px;
    height: 24px;
    background: var(--bar-dark);
    border-bottom: 1px solid #8a8a8a;
}

.pane.current {
    background: #b5b5b5;
}

.handle {
    position: absolute;
    top: 600px;
    left: 0;
    width: 7px;
    height: 39px;
    background: radial-gradient(circle at 2px 50%, #ddd 1px, #999 3px, var(--bar) 4px);
    border-right: 1px solid #777;
}

/* bottom bars */
.footer {
    position: relative;
    flex: none;
    background: var(--bar);
}

.sheets {
    display: flex;
    height: 16px;
    border-top: 1px solid #666;
    border-bottom: 1px solid var(--line);
}

.sheet-nav {
    display: flex;
    padding: 0 1px;
}

.sheet-nav button {
    display: flex;
    align-items: center;
    justify-content: center;
    width: 16px;
    background: #a6a6a6;
    border: 1px solid #c4c4c4;
    border-right-color: #777;
}

.sheet-nav svg {
    width: 10px;
    height: 10px;
    fill: #858585;
    stroke: #858585;
}

.sheet {
    display: flex;
    padding: 0 15px 0 7px;
    font-family: "Noto Sans CJK SC", sans-serif;
    line-height: 11px;
    background: var(--bar-dark);
    border-right: 1px solid var(--line);
}

.sheet.active {
    padding: 0 9px 0 12px;
    background: var(--bar);
}

.status {
    display: flex;
    align-items: center;
    height: 17px;
    padding: 1px 2px 0 0;
    font-size: 12px;
    line-height: 16px;
}

.product {
    margin-right: auto;
    font-size: 13px;
}

.state {
    height: 16px;
    padding-right: 7px;
    border-right: 1px solid #e0e0e0;
}

.mode {
    margin-left: 7px;
    padding: 0 6px 0 3px;
    border-left: 1px solid #e0e0e0;
}

.gap {
    width: 16px;
}

.units {
    display: flex;
    align-items: center;
    gap: 15px;
    margin-left: 27px;
    font-size: 13px;
}

.units svg {
    width: 6px;
    height: 4px;
    transform: rotate(180deg);
}

.tag {
    margin-left: 66px;
}

.ime {
    position: absolute;
    bottom: 0;
    left: calc(58% + 1px);
    display: flex;
    align-items: center;
    width: 283px;
    height: 30px;
    padding: 0 2px 0 8px;
    background: #fff;
    border-radius: 6px;
    color: #111;
}

.ime-logo {
    width: 20px;
    height: 18px;
}

.ime i {
    width: 1px;
    height: 18px;
    margin: 0 3px 0 8px;
    background: #ccc;
}

.ime button {
    display: flex;
    flex: 1 1 0;
    align-items: center;
    justify-content: center;
    font-size: 17px;
    font-weight: 500;
}

.ime button svg {
    width: 18px;
    height: 18px;
}
```
